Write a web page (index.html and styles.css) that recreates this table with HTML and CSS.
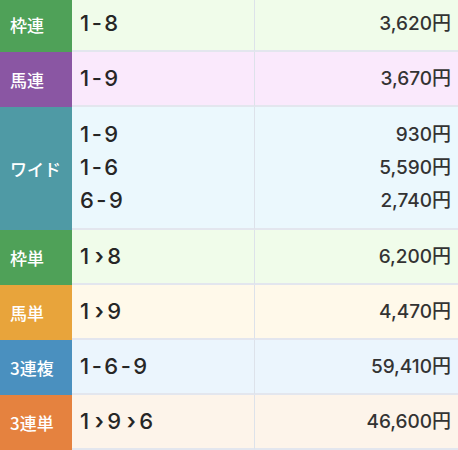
FILE: index.html
```html
<!DOCTYPE html>
<html lang="ja">
<head>
<meta charset="utf-8">
<title>払戻金</title>
<link rel="stylesheet" href="styles.css">
</head>
<body>
<div class="payouts">
  <div class="row wakuren">
    <div class="label">枠連</div>
    <div class="combos"><div class="line">1-8</div></div>
    <div class="amounts"><div class="line">3,620円</div></div>
  </div>
  <div class="row umaren">
    <div class="label">馬連</div>
    <div class="combos"><div class="line">1-9</div></div>
    <div class="amounts"><div class="line">3,670円</div></div>
  </div>
  <div class="row wide">
    <div class="label">ワイド</div>
    <div class="combos">
      <div class="line">1-9</div>
      <div class="line">1-6</div>
      <div class="line">6-9</div>
    </div>
    <div class="amounts">
      <div class="line">930円</div>
      <div class="line">5,590円</div>
      <div class="line">2,740円</div>
    </div>
  </div>
  <div class="row wakutan">
    <div class="label">枠単</div>
    <div class="combos"><div class="line">1<span class="arrow">›</span>8</div></div>
    <div class="amounts"><div class="line">6,200円</div></div>
  </div>
  <div class="row umatan">
    <div class="label">馬単</div>
    <div class="combos"><div class="line">1<span class="arrow">›</span>9</div></div>
    <div class="amounts"><div class="line">4,470円</div></div>
  </div>
  <div class="row trio">
    <div class="label">3連複</div>
    <div class="combos"><div class="line">1-6-9</div></div>
    <div class="amounts"><div class="line">59,410円</div></div>
  </div>
  <div class="row trifecta">
    <div class="label">3連単</div>
    <div class="combos"><div class="line">1<span class="arrow">›</span>9<span class="arrow">›</span>6</div></div>
    <div class="amounts"><div class="line">46,600円</div></div>
  </div>
</div>
</body>
</html>
```

FILE: styles.css
```css
html, body {
  margin: 0;
  padding: 0;
  background: #ffffff;
}

body {
  font-family: Inter, "Noto Sans CJK JP", sans-serif;
  color: #2e2e2e;
  overflow: hidden;
}

.payouts {
  margin-top: -3px;
  display: flex;
  flex-direction: column;
}

.row {
  display: grid;
  grid-template-columns: 72px 182px 1fr;
  min-height: 55px;
}

.label {
  display: flex;
  align-items: center;
  justify-content: flex-start;
  padding-left: 10px;
  color: #ffffff;
  font-family: "Noto Sans CJK JP", sans-serif;
  font-weight: 500;
  font-size: 17px;
}

.combos,
.amounts {
  display: flex;
  flex-direction: column;
  justify-content: center;
  border-bottom: 2px solid #e3e6ee;
}

.combos {
  padding-left: 8px;
  font-size: 22px;
  font-weight: 500;
  letter-spacing: 2.5px;
  color: #262626;
}

.amounts {
  border-left: 1px solid #dde2ea;
  padding-right: 7px;
  text-align: right;
  font-size: 19px;
  font-weight: 500;
  color: #333333;
}

.line {
  line-height: 33px;
}

.arrow {
  display: inline-block;
  font-weight: 600;
  margin: 0 1px 0 3px;
}

.wide {
  min-height: 123px;
}

.wakuren .label, .wakutan .label { background: #4fa158; }
.wakuren .combos, .wakuren .amounts,
.wakutan .combos, .wakutan .amounts { background: #f0fcea; }

.umaren .label { background: #8a56a3; }
.umaren .combos, .umaren .amounts { background: #fae9fc; }

.wide .label { background: #4f9aa5; }
.wide .combos, .wide .amounts { background: #ebf8fd; }

.umatan .label { background: #e8a43b; }
.umatan .combos, .umatan .amounts { background: #fff9ea; }

.trio .label { background: #4a90bf; }
.trio .combos, .trio .amounts { background: #ebf5fd; }

.trifecta .label { background: #e5823f; }
.trifecta .combos, .trifecta .amounts { background: #fdf4ea; }
```
